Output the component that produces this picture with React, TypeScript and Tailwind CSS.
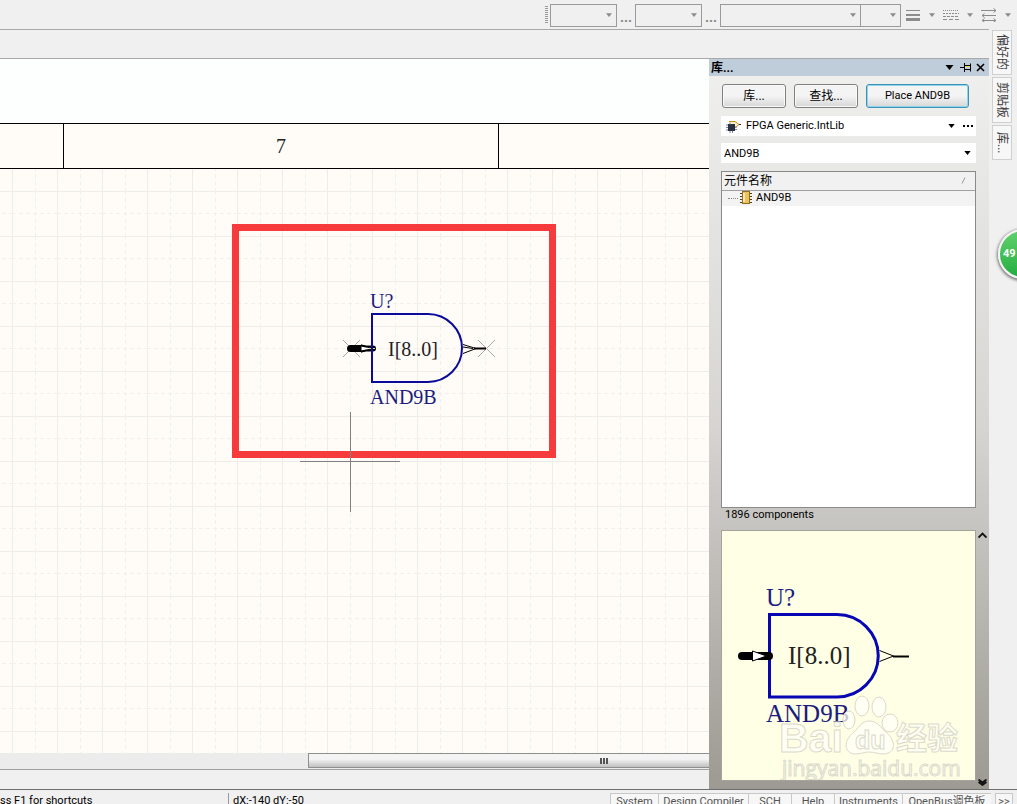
import { ReactNode } from "react";

const bottomTabs = [
  { label: "System", width: "w-12" },
  { label: "Design Compiler", width: "w-[90px]" },
  { label: "SCH", width: "w-[43px]" },
  { label: "Help", width: "w-[43px]" },
  { label: "Instruments", width: "w-[68px]" },
  { label: "OpenBus调色板", width: "w-[89px]" },
];

function Caret({ className = "" }: { className?: string }) {
  return (
    <svg viewBox="0 0 8 5" className={`pointer-events-none shrink-0 ${className}`} aria-hidden="true">
      <path d="M0 0h8L4 5z" fill="currentColor" />
    </svg>
  );
}

function ToolSelect({ label, className }: { label: string; className: string }) {
  return (
    <label className={`flex h-[23px] items-center border border-[#9a9a9a] pr-1 ${className}`}>
      <select aria-label={label} className="h-full min-w-0 flex-1 appearance-none bg-transparent" />
      <Caret className="h-1 w-1.5 text-[#8c8c8c]" />
    </label>
  );
}

function ToolButton({ label, children }: { label: string; children: ReactNode }) {
  return (
    <button aria-label={label} className="flex w-[38px] items-center gap-2 pl-1 text-[#8c8c8c]">
      <svg viewBox="0 0 16 14" className="h-3.5 w-4 shrink-0" stroke="currentColor" fill="none">
        {children}
      </svg>
      <Caret className="h-1 w-1.5" />
    </button>
  );
}

function Toolbar() {
  return (
    <header className="flex h-[29px] shrink-0 items-center justify-end pt-px pr-0.5">
      <div className="mr-0.5 h-[18px] w-[3px] bg-[repeating-linear-gradient(#9a9a9a_0_1px,transparent_1px_2px)]" />
      <ToolSelect label="Style" className="w-[67px]" />
      <span className="w-[18px] pt-1 text-center text-sm font-bold text-[#888]">...</span>
      <ToolSelect label="Colour" className="w-[67px]" />
      <span className="w-[18px] pt-1 text-center text-sm font-bold text-[#888]">...</span>
      <ToolSelect label="Font" className="w-[141px]" />
      <ToolSelect label="Size" className="-ml-px w-[41px]" />
      <ToolButton label="Line width">
        <path d="M1 2.500h14" />
        <path d="M1 7h14" strokeWidth="2" />
        <path d="M1 11.500h14" strokeWidth="3" />
      </ToolButton>
      <ToolButton label="Line style">
        <path d="M0 2.500h16" strokeDasharray="1 1" />
        <path d="M0 5.500h16" strokeDasharray="2 1" />
        <path d="M0 8.500h16" strokeDasharray="3 1" />
        <path d="M0 11.500h16" strokeDasharray="4 2" />
      </ToolButton>
      <ToolButton label="Arrow style">
        <path d="M0 2.500h15M12.500 .5l2.500 2-2.500 2M1 7.500h14M3.500 5.500L1 7.500l2.500 2M1 12.500h14M3.500 10.500l-2.500 2 2.500 1.500M12.500 10.500l2.500 2-2.500 1.500" />
      </ToolButton>
    </header>
  );
}

function Schematic() {
  return (
    <svg className="block h-full w-full font-['Liberation_Serif',serif]" role="img" aria-label="Schematic sheet">
      <defs>
        <pattern id="grid" x="12" y="22" width="45" height="45" patternUnits="userSpaceOnUse">
          <path d="M.5 0v45M0 .5h45" stroke="#eeede9" />
          <path d="M23.500 0v45M0 22.500h45" stroke="#f3f0eb" strokeDasharray="4 3" />
        </pattern>
      </defs>
      <rect width="100%" height="100%" fill="url(#grid)" />

      <rect x="235.500" y="58.500" width="317" height="227" fill="none" stroke="#f73b3d" strokeWidth="7" />
      {/* cursor */}
      <path d="M350.500 243v100M300 292.500h100" stroke="#808080" />

      {/* pins */}
      <path d="M343 171l17 17M360 171l-17 17M478 171l17 17M495 171l-17 17" stroke="#a8a8a8" />
      <path d="M350.500 179.500h10" stroke="#000" strokeWidth="7" strokeLinecap="round" />
      <path d="M361 176l11 3.500-11 3.500z" fill="#fff" stroke="#000" />
      <path d="M361 176.500l5 1h7M361 182.500l5-1h7" stroke="#000" strokeWidth="2" fill="none" />
      <circle cx="373" cy="179.500" r="3" fill="#000" />
      <path d="M369 179.500h6M372.500 177.500v4" stroke="#e8e070" />
      <path d="M463 175.500l13 4-13 5M463 178l10 1.500" fill="none" stroke="#000" />
      <path d="M474 179.500h12" stroke="#000" strokeWidth="2" />

      {/* gate body */}
      <path d="M428 145h-56v68h56a34 34 0 0 0 0-68z" fill="none" stroke="#0a0a9c" strokeWidth="2" />
      <g fontSize="20">
        <text x="370" y="139" fill="#1c1c80">U?</text>
        <text x="388" y="187" fill="#222">I[8..0]</text>
        <text x="370" y="235" fill="#1c1c80">AND9B</text>
      </g>
    </svg>
  );
}

function Editor() {
  return (
    <main className="flex min-w-0 flex-1 flex-col">
      <div className="h-16 shrink-0 bg-[#fdfefe]" />
      <div className="flex h-[46px] shrink-0 border-y border-black bg-[#fffcf7] font-['Liberation_Serif',serif] text-xl text-[#222]">
        <div className="w-16 border-r border-black" />
        <div className="flex w-[435px] items-center justify-center border-r border-black">7</div>
      </div>
      <div className="min-h-0 flex-1 bg-[#fffcf7]">
        <Schematic />
      </div>
      <div className="flex h-[17px] shrink-0 border-b border-[#a0a0a0] bg-[#ececec] pl-[308px]">
        <div className="flex h-[15px] flex-1 items-center gap-px border border-r-0 border-[#8f8f8f] bg-linear-to-b from-[#f4f4f4] from-40% to-[#c0c0c0] pl-[291px]">
          <i className="h-1.5 w-0.5 bg-[#555]" />
          <i className="h-1.5 w-0.5 bg-[#555]" />
          <i className="h-1.5 w-0.5 bg-[#555]" />
        </div>
      </div>
      <div className="h-[19px] shrink-0" />
    </main>
  );
}

function LibraryIcon() {
  return (
    <svg viewBox="0 0 16 14" className="h-3.5 w-4 shrink-0" aria-hidden="true">
      <path d="M3 2.500h6l4 3-4 3.500H6" fill="#fff3c0" stroke="#c98a2a" />
      <path d="M13 5.500h2" stroke="#333" />
      <rect x="2" y="5" width="7" height="7" fill="#2b3145" />
      <path d="M0 6h2M0 8.500h2M0 11h2M9 8h2M9 10.500h2M4 12v2M6.500 12v2M4 3.500v2" stroke="#7c8496" />
    </svg>
  );
}

function ChipIcon() {
  return (
    <svg viewBox="0 0 12 14" className="h-3.5 w-3 shrink-0" aria-hidden="true">
      <path d="M0 2.500h12M0 5.500h12M0 8.500h12M0 11.500h12" stroke="#54401a" />
      <rect x="2.500" y=".5" width="7" height="12" fill="#edc15c" stroke="#8f6d24" />
      <path d="M4 2v9" stroke="#fae8b4" strokeWidth="2" />
    </svg>
  );
}

function Preview() {
  return (
    <svg viewBox="0 0 253 249" className="block h-full w-full" role="img" aria-label="AND9B preview">
      <g fontFamily="'Liberation Serif', serif" fontSize="25">
        <text x="44" y="75" fill="#1c1c80">U?</text>
        <text x="66" y="133" fill="#222">I[8..0]</text>
        <text x="44" y="191" fill="#1c1c80">AND9B</text>
      </g>
      <path d="M115 83.500H47.500v82.500H115a41.250 41.250 0 0 0 0-82.500z" fill="none" stroke="#0606b4" strokeWidth="3" />
      <path d="M20 125h27" stroke="#000" strokeWidth="8" strokeLinecap="round" />
      <path d="M30.500 120l14 5-14 5z" fill="#fff" stroke="#000" />
      <path d="M157.500 119.500l14 5.500-14 5.500" fill="none" stroke="#000" />
      <path d="M171 125.500h16" stroke="#000" strokeWidth="2" />

      {/* watermark */}
      <g fill="#fffff8" stroke="#dadacb" fillOpacity=".75" fontWeight="bold">
        <text x="57" y="221" fontSize="41" fontFamily="'Liberation Sans', sans-serif">Bai</text>
        <ellipse cx="127" cy="189" rx="6" ry="9" />
        <ellipse cx="140" cy="175" rx="7" ry="10" />
        <ellipse cx="157" cy="176" rx="7" ry="10" />
        <ellipse cx="168" cy="192" rx="8" ry="9" />
        <path d="M147 190c-8 0-10 7-16 12-9 7-10 20 2 21 6 0 9-2 14-2s9 2 15 2c12-1 12-13 3-21-6-5-9-12-18-12z" />
        <text x="133" y="218" fontSize="25" fontFamily="'Liberation Sans', sans-serif">du</text>
        <text x="174" y="218" fontSize="31" fontFamily="'Noto Sans CJK SC', sans-serif">经验</text>
        <text x="60" y="245" fontSize="21" fontWeight="normal" fontFamily="'Open Sans', sans-serif">jingyan.baidu.com</text>
      </g>
    </svg>
  );
}

const buttonClass =
  "h-6 rounded-[3px] border bg-linear-to-b from-[#f4f4f4] from-50% to-[#d6d6d6] shadow-[inset_0_0_0_1px_#fafafa]";

function LibraryPanel() {
  return (
    <aside className="flex w-[280px] shrink-0 flex-col bg-linear-to-b from-[#f0f0ef] via-[#d6d5d2] to-[#9d9a93]">
      <div className="flex h-[17px] shrink-0 items-center bg-[#bfcddb] px-0.5">
        <h2 className="flex-1 text-xs font-bold">库...</h2>
        <button aria-label="Panel menu" className="mr-1.5">
          <Caret className="h-[5px] w-[9px]" />
        </button>
        <button aria-label="Pin panel" className="mr-1">
          <svg viewBox="0 0 12 9" className="h-[9px] w-3" fill="none" stroke="#000">
            <path d="M0 4.500h4M4.500 0v9M4.500 2.500h6v4h-6M10.500 .5v8" />
            <path d="M5 3.500h5" stroke="#e6e04a" />
          </svg>
        </button>
        <button aria-label="Close panel" className="mr-0.5">
          <svg viewBox="0 0 9 9" className="size-[9px]" stroke="#000" strokeWidth="1.6">
            <path d="M1 1l7 7M8 1L1 8" />
          </svg>
        </button>
      </div>

      <div className="flex min-h-0 flex-1">
        <div className="flex min-w-0 flex-1 flex-col pt-2 pb-2 pl-3">
          <div className="flex gap-2 pl-px">
            <button className={`${buttonClass} w-16 border-[#808080] text-xs`}>库...</button>
            <button className={`${buttonClass} w-16 border-[#808080] text-xs`}>查找...</button>
            <button className={`${buttonClass} w-[103px] border-[#3c93b8] ring-1 ring-[#8fd3ec] ring-inset`}>
              Place AND9B
            </button>
          </div>

          <div className="mt-2 flex h-5 shrink-0 items-center bg-white pr-[3px] pl-[5px]">
            <LibraryIcon />
            <select aria-label="Library" className="ml-1 h-full min-w-0 flex-1 appearance-none">
              <option>FPGA Generic.IntLib</option>
            </select>
            <Caret className="mr-2 h-1 w-[7px]" />
            <button aria-label="More" className="flex gap-0.5">
              <i className="size-0.5 bg-black" />
              <i className="size-0.5 bg-black" />
              <i className="size-0.5 bg-black" />
            </button>
          </div>

          <div className="mt-[7px] flex h-5 shrink-0 items-center bg-white pr-[5px] pl-[3px]">
            <input aria-label="Filter" defaultValue="AND9B" className="h-full min-w-0 flex-1" />
            <button aria-label="Filter history">
              <Caret className="h-1 w-[7px]" />
            </button>
          </div>

          <div className="mt-2 min-h-0 flex-1 border border-[#8a8a8a] bg-white">
            <table className="w-full border-collapse text-left">
              <thead>
                <tr className="h-[18px] border-b border-[#a0a0a0] bg-[#f1f1f1]">
                  <th className="px-0.5 py-0 text-xs leading-4 font-normal">
                    <span className="flex items-center justify-between pr-1.5">
                      元件名称
                      <svg viewBox="0 0 6 7" className="h-[7px] w-1.5" stroke="#999">
                        <path d="M1 6.500L4 .5" />
                      </svg>
                    </span>
                  </th>
                </tr>
              </thead>
              <tbody>
                <tr className="bg-[#f3f3f3]">
                  <td className="p-0">
                    <span className="flex h-[15px] items-center pl-1.5">
                      <i className="mr-0.5 w-2.5 border-t border-dotted border-[#888]" />
                      <ChipIcon />
                      <span className="ml-1">AND9B</span>
                    </span>
                  </td>
                </tr>
              </tbody>
            </table>
          </div>

          <p className="h-[22px] shrink-0 pl-1 leading-[14px]">1896 components</p>

          <div className="h-[251px] shrink-0 border border-[#a5a49c] bg-[#ffffe6]">
            <Preview />
          </div>
        </div>

        <div className="flex w-[13px] shrink-0 flex-col items-center justify-end pb-[3px]">
          <div className="flex h-[254px] flex-col justify-between">
            <svg viewBox="0 0 9 7" className="h-[7px] w-[9px]" fill="none" stroke="#111" strokeWidth="1.8">
              <path d="M.5 5.500l4-4 4 4" />
            </svg>
            <svg viewBox="0 0 9 7" className="h-[7px] w-[9px]" fill="none" stroke="#111" strokeWidth="1.8">
              <path d="M.5 .5l4 3 4-3M.5 3l4 3 4-3" />
            </svg>
          </div>
        </div>
      </div>
    </aside>
  );
}

function SideRail() {
  const tab =
    "flex w-5 items-center justify-center border border-[#d0d0d0] bg-[#f7f7f7] text-xs leading-4 text-[#3a3a3a] [writing-mode:vertical-rl] [text-orientation:sideways]";
  return (
    <nav className="relative flex w-7 shrink-0 flex-col gap-0.5 pt-px pl-[3px]">
      <button className={`${tab} h-[45px]`}>偏好的</button>
      <button className={`${tab} h-[46px]`}>剪贴板</button>
      <button className={`${tab} h-[35px]`}>库...</button>
      {/* floating progress ball, half off screen */}
      <div className="absolute top-[200px] left-[9px] flex size-[50px] items-center rounded-full border-2 border-[#f4f4f4] bg-linear-to-b from-[#5fd06c] to-[#1fae42] pl-[3px] text-[11px] font-bold text-white shadow-[0_1px_3px_1px_#777]">
        49
      </div>
    </nav>
  );
}

function StatusBar() {
  return (
    <footer className="flex h-[15px] shrink-0 overflow-hidden border-t border-[#6e6e6e] pt-[3px] leading-4">
      <div className="w-[228px] shrink-0">ss F1 for shortcuts</div>
      <div className="flex-1 border-l border-[#999] pl-1">dX:-140 dY:-50</div>
      <div className="flex text-[#555]">
        {bottomTabs.map((tab) => (
          <button
            key={tab.label}
            className={`${tab.width} h-5 shrink-0 border-t border-l border-[#c8c8c8] bg-[#f7f7f7] pb-1 whitespace-nowrap`}
          >
            {tab.label}
          </button>
        ))}
        <button className="mr-1 ml-1 h-5 w-[18px] border border-[#c8c8c8] bg-[#f7f7f7] pb-1">&gt;&gt;</button>
      </div>
    </footer>
  );
}

export default function App() {
  return (
    <div className="flex h-screen flex-col overflow-hidden bg-[#f0f0f0] font-['Roboto','Noto_Sans_CJK_SC',sans-serif] text-[11px] leading-4 text-black">
      <Toolbar />
      <div className="flex min-h-0 flex-1">
        <div className="flex min-w-0 flex-1 flex-col">
          <div className="h-[30px] shrink-0 border-y border-[#a9a9a9]" />
          <div className="flex min-h-0 flex-1">
            <Editor />
            <LibraryPanel />
          </div>
        </div>
        <SideRail />
      </div>
      <StatusBar />
    </div>
  );
}
